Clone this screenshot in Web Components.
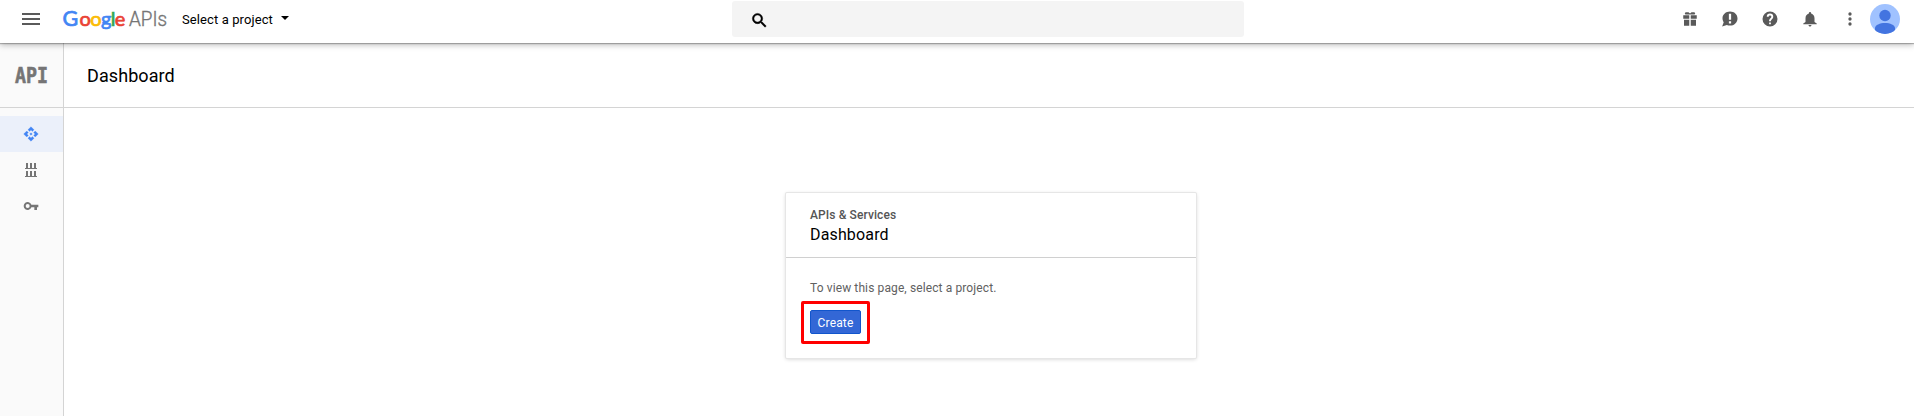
<!DOCTYPE html>
<html lang="en">
<head>
<meta charset="utf-8">
<title>Dashboard</title>
<style>
body{margin:0;background:#fff;font-family:Roboto,"Liberation Sans",sans-serif;color:#000}
</style>
</head>
<body>
<api-console></api-console>
<script>
const define=(name,html)=>customElements.define(name,class extends HTMLElement{
  constructor(){super();const t=document.createElement('template');t.innerHTML=html;
    this.attachShadow({mode:'open'}).append(t.content.cloneNode(true));}
});

const icons={
  menu:'M3 6h18v2H3zM3 11h18v2H3zM3 16h18v2H3z',
  search:'M15.5 14h-.79l-.28-.27A6.47 6.47 0 0 0 16 9.5 6.5 6.5 0 1 0 9.5 16c1.61 0 3.09-.59 4.23-1.57l.27.28v.79l5 4.99L20.49 19zm-6 0C7.01 14 5 11.99 5 9.5S7.01 5 9.5 5 14 7.01 14 9.5 11.99 14 9.5 14z',
  gift:'M3 7h8v4.500H3zM13 7h8v4.500h-8zM4 13h7v8H4zM13 13h7v8h-7zM6 3h4l2 1.800L14 3h4l1 2-1 1H6L5 5z',
  alert:'M12 2C6.500 2 2 5.800 2 11c0 2.300.8 4.200 1.600 5.400L1.500 22l6.300-1.900c1.300.5 2.700.7 4.200.7 5.600 0 10-4.200 10-9.600S17.600 2 12 2zm-1.500 3h3v8h-3zm0 10h3v3h-3z',
  help:'M12 2a10 10 0 1 0 0 20 10 10 0 0 0 0-20zm1.200 17h-2.400v-2.400h2.400zm2.300-7.700l-.9.900c-.8.8-1.300 1.300-1.300 2.800h-2.600v-.6c0-1.100.5-2.100 1.200-2.800l1.300-1.300c.4-.3.6-.8.6-1.300a1.800 1.800 0 0 0-3.600 0H7.700a4.300 4.300 0 0 1 8.600 0c0 .9-.3 1.700-.8 2.300z',
  bell:'M12 22c1.100 0 2-.9 2-2h-4c0 1.100.9 2 2 2zm6-6v-5c0-3.070-1.630-5.640-4.500-6.320V4a1.500 1.500 0 0 0-3 0v.68C7.640 5.360 6 7.920 6 11v5l-3 2v1h18v-1z',
  more:'M12 8a2 2 0 1 0 0-4 2 2 0 0 0 0 4zM12 14a2 2 0 1 0 0-4 2 2 0 0 0 0 4zM12 20a2 2 0 1 0 0-4 2 2 0 0 0 0 4z',
  api:'M14 12l-2 2-2-2 2-2 2 2zm-2-6l2.120 2.120 2.500-2.500L12 1 7.380 5.620l2.500 2.500L12 6zm-6 6l2.120-2.120-2.500-2.500L1 12l4.620 4.620 2.500-2.500L6 12zm12 0l-2.120 2.120 2.500 2.500L23 12l-4.620-4.620-2.500 2.500L18 12zm-6 6l-2.120-2.120-2.500 2.500L12 23l4.620-4.620-2.500-2.500L12 18z',
  library:'M1 5h1V0h2v5h2V0h2v5h2V0h2v5h1v1H1zM1 13h1V8h2v5h2V8h2v5h2V8h2v5h1v1H1z',
  key:'M12.650 10A6 6 0 1 0 12.650 14H17v4h4v-4h2v-4zM7 15a3 3 0 1 1 0-6 3 3 0 0 1 0 6z'
};
customElements.define('ui-icon',class extends HTMLElement{
  connectedCallback(){
    const r=this.attachShadow({mode:'open'}),box=this.getAttribute('box')||'0 0 24 24',s=this.getAttribute('size')||18;
    r.innerHTML=`<style>:host{display:block;flex:none;width:${s}px;height:${s}px}svg{display:block;width:100%;height:100%;overflow:visible}</style>
    <svg viewBox="${box}" fill="currentColor" fill-rule="evenodd" stroke="currentColor" stroke-width="${this.getAttribute('weight')||0}" aria-hidden="true"><path d="${icons[this.getAttribute('name')]}"/></svg>`;
  }
});

define('brand-logo',`<style>:host{display:block;width:106px;height:34px}svg{display:block;overflow:visible}text{font-family:Lato,sans-serif;font-size:20px}.cap{font-size:21.500px}.suffix{font-family:Roboto,sans-serif;font-weight:300}</style>
<svg width="106" height="34" viewBox="0 0 106 34">
<text y="24" stroke-width=".7"><tspan class="cap" x="-.6" fill="#4285f4" stroke="#4285f4">G</tspan><tspan x="16.500" fill="#ea4335" stroke="#ea4335">o</tspan><tspan x="27.300" fill="#fbbc05" stroke="#fbbc05">o</tspan><tspan x="38" fill="#4285f4" stroke="#4285f4">g</tspan><tspan x="47.800" fill="#34a853" stroke="#34a853">l</tspan><tspan x="51.800" fill="#ea4335" stroke="#ea4335">e</tspan></text>
<text class="suffix" y="24" x="66" textLength="38" lengthAdjust="spacingAndGlyphs" fill="#757575" stroke="#757575" stroke-width=".4">APIs</text></svg>`);

define('user-avatar',`<style>:host{display:block;width:30px;height:30px}svg{display:block}</style>
<svg width="30" height="30" viewBox="0 0 30 30"><defs><clipPath id="c"><circle cx="15" cy="15" r="15"/></clipPath></defs>
<circle cx="15" cy="15" r="15" fill="#a0c2ff"/><g clip-path="url(#c)" fill="#4374e0"><circle cx="15" cy="11.500" r="5.700"/><path d="M5 30V24c0-3 5-5 10-5s10 2 10 5v6z"/></g></svg>`);

define('top-bar',`<style>
:host{display:grid;grid-template-columns:732px 512px 1fr;height:43px;background:#fff;position:relative;z-index:2;box-shadow:0 1px 1px rgba(0,0,0,.25),0 2px 6px rgba(0,0,0,.26)}
.left{display:flex;align-items:center;padding:0 0 5px 19px;box-sizing:border-box}
ui-icon{color:#5a5a5a}
brand-logo{margin-left:20px}
.pick{font-size:13px;letter-spacing:.1px;margin:1px 0 0 13px;white-space:nowrap}
.caret{border:4px solid transparent;border-top-color:#000;border-bottom:0;margin:-2px 0 0 8px}
.search{height:36px;margin-top:1px;border-radius:3px;background:#f4f4f4;display:flex;align-items:center;padding:2px 0 0 18px;box-sizing:border-box}
.search ui-icon{color:#000}
.right{display:flex;align-items:center;justify-content:flex-end;height:38px;padding-right:14px}
.right ui-icon+ui-icon{margin-left:22px}
.right ui-icon.dots{margin:0 -1px 0 21px}
user-avatar{margin-left:11px}
</style>
<div class="left"><ui-icon name="menu" size="24"></ui-icon><brand-logo></brand-logo><span class="pick">Select a project</span><span class="caret"></span></div>
<div class="search"><ui-icon name="search" size="19" weight=".6"></ui-icon></div>
<div class="right"><ui-icon name="gift"></ui-icon><ui-icon name="alert"></ui-icon><ui-icon name="help"></ui-icon><ui-icon name="bell"></ui-icon><ui-icon class="dots" name="more" size="20"></ui-icon><user-avatar></user-avatar></div>`);

define('side-item',`<style>:host{display:flex;align-items:center;justify-content:center;height:36px;padding-right:1px;color:#757575}:host([active]){background:#ebf0fa;color:#4285f4}</style><slot></slot>`);

define('side-nav',`<style>
:host{display:block;background:#fafafa;border-right:1px solid #d4d4d4;box-sizing:border-box}
.head{height:64px;border-bottom:1px solid #d4d4d4;display:flex;align-items:center;padding-left:12px}
.items{padding-top:8px}text{font:bold 21.500px "DejaVu Sans Mono",monospace}
</style>
<div class="head"><svg width="44" height="32"><text x="3" y="24" textLength="33" lengthAdjust="spacingAndGlyphs" fill="#757575" stroke="#757575" stroke-width=".6">API</text></svg></div>
<div class="items"><side-item active><ui-icon name="api" size="16" weight=".3"></ui-icon></side-item>
<side-item><ui-icon name="library" size="14" box="0 0 14 14"></ui-icon></side-item>
<side-item><ui-icon name="key" size="16"></ui-icon></side-item></div>`);

define('action-button',`<style>:host{display:block}button{display:block;width:51px;height:24px;padding:1px 0 0;border:1px solid #1155cc;border-radius:2px;background:#3367d6;color:#fff;font:12px Roboto,sans-serif;letter-spacing:.15px}</style><button><slot></slot></button>`);

define('project-card',`<style>
:host{display:block;width:410px;height:165px;border-radius:1px;background:#fff;box-shadow:0 0 0 1px #e6e6e6,0 1px 4px rgba(0,0,0,.2)}
header{height:65px;border-bottom:1px solid #d0d0d0;padding:14px 24px 0;box-sizing:border-box}
.kicker{font-size:12px;line-height:16px;font-weight:500;color:#555;letter-spacing:.1px}
.title{font-size:16px;line-height:24px;letter-spacing:.15px}
.body{padding:22px 24px 0 16px}
p{margin:0 0 0 8px;font-size:12px;line-height:16px;color:#616161;letter-spacing:.11px}
.mark{width:69px;height:43px;box-sizing:border-box;border:3px solid #f00;border-radius:2px;padding:6px;margin:5px 0 0 -1px}
</style>
<header><div class="kicker">APIs &amp; Services</div><div class="title">Dashboard</div></header>
<div class="body"><p>To view this page, select a project.</p><div class="mark"><action-button>Create</action-button></div></div>`);

define('page-main',`<style>
:host{display:block}
.bar{height:64px;border-bottom:1px solid #d4d4d4;padding-left:23px;font-size:18px;line-height:66px;letter-spacing:.08px}
.stage{display:flex;justify-content:center;padding:85px 0 0 4px}
</style><div class="bar">Dashboard</div><div class="stage"><slot></slot></div>`);

define('api-console',`<style>:host{display:grid;grid-template:43px 373px/64px 1fr;height:416px;overflow:hidden}top-bar{grid-column:1/3}</style>
<top-bar></top-bar><side-nav></side-nav><page-main><project-card></project-card></page-main>`);
</script>
</body>
</html>
